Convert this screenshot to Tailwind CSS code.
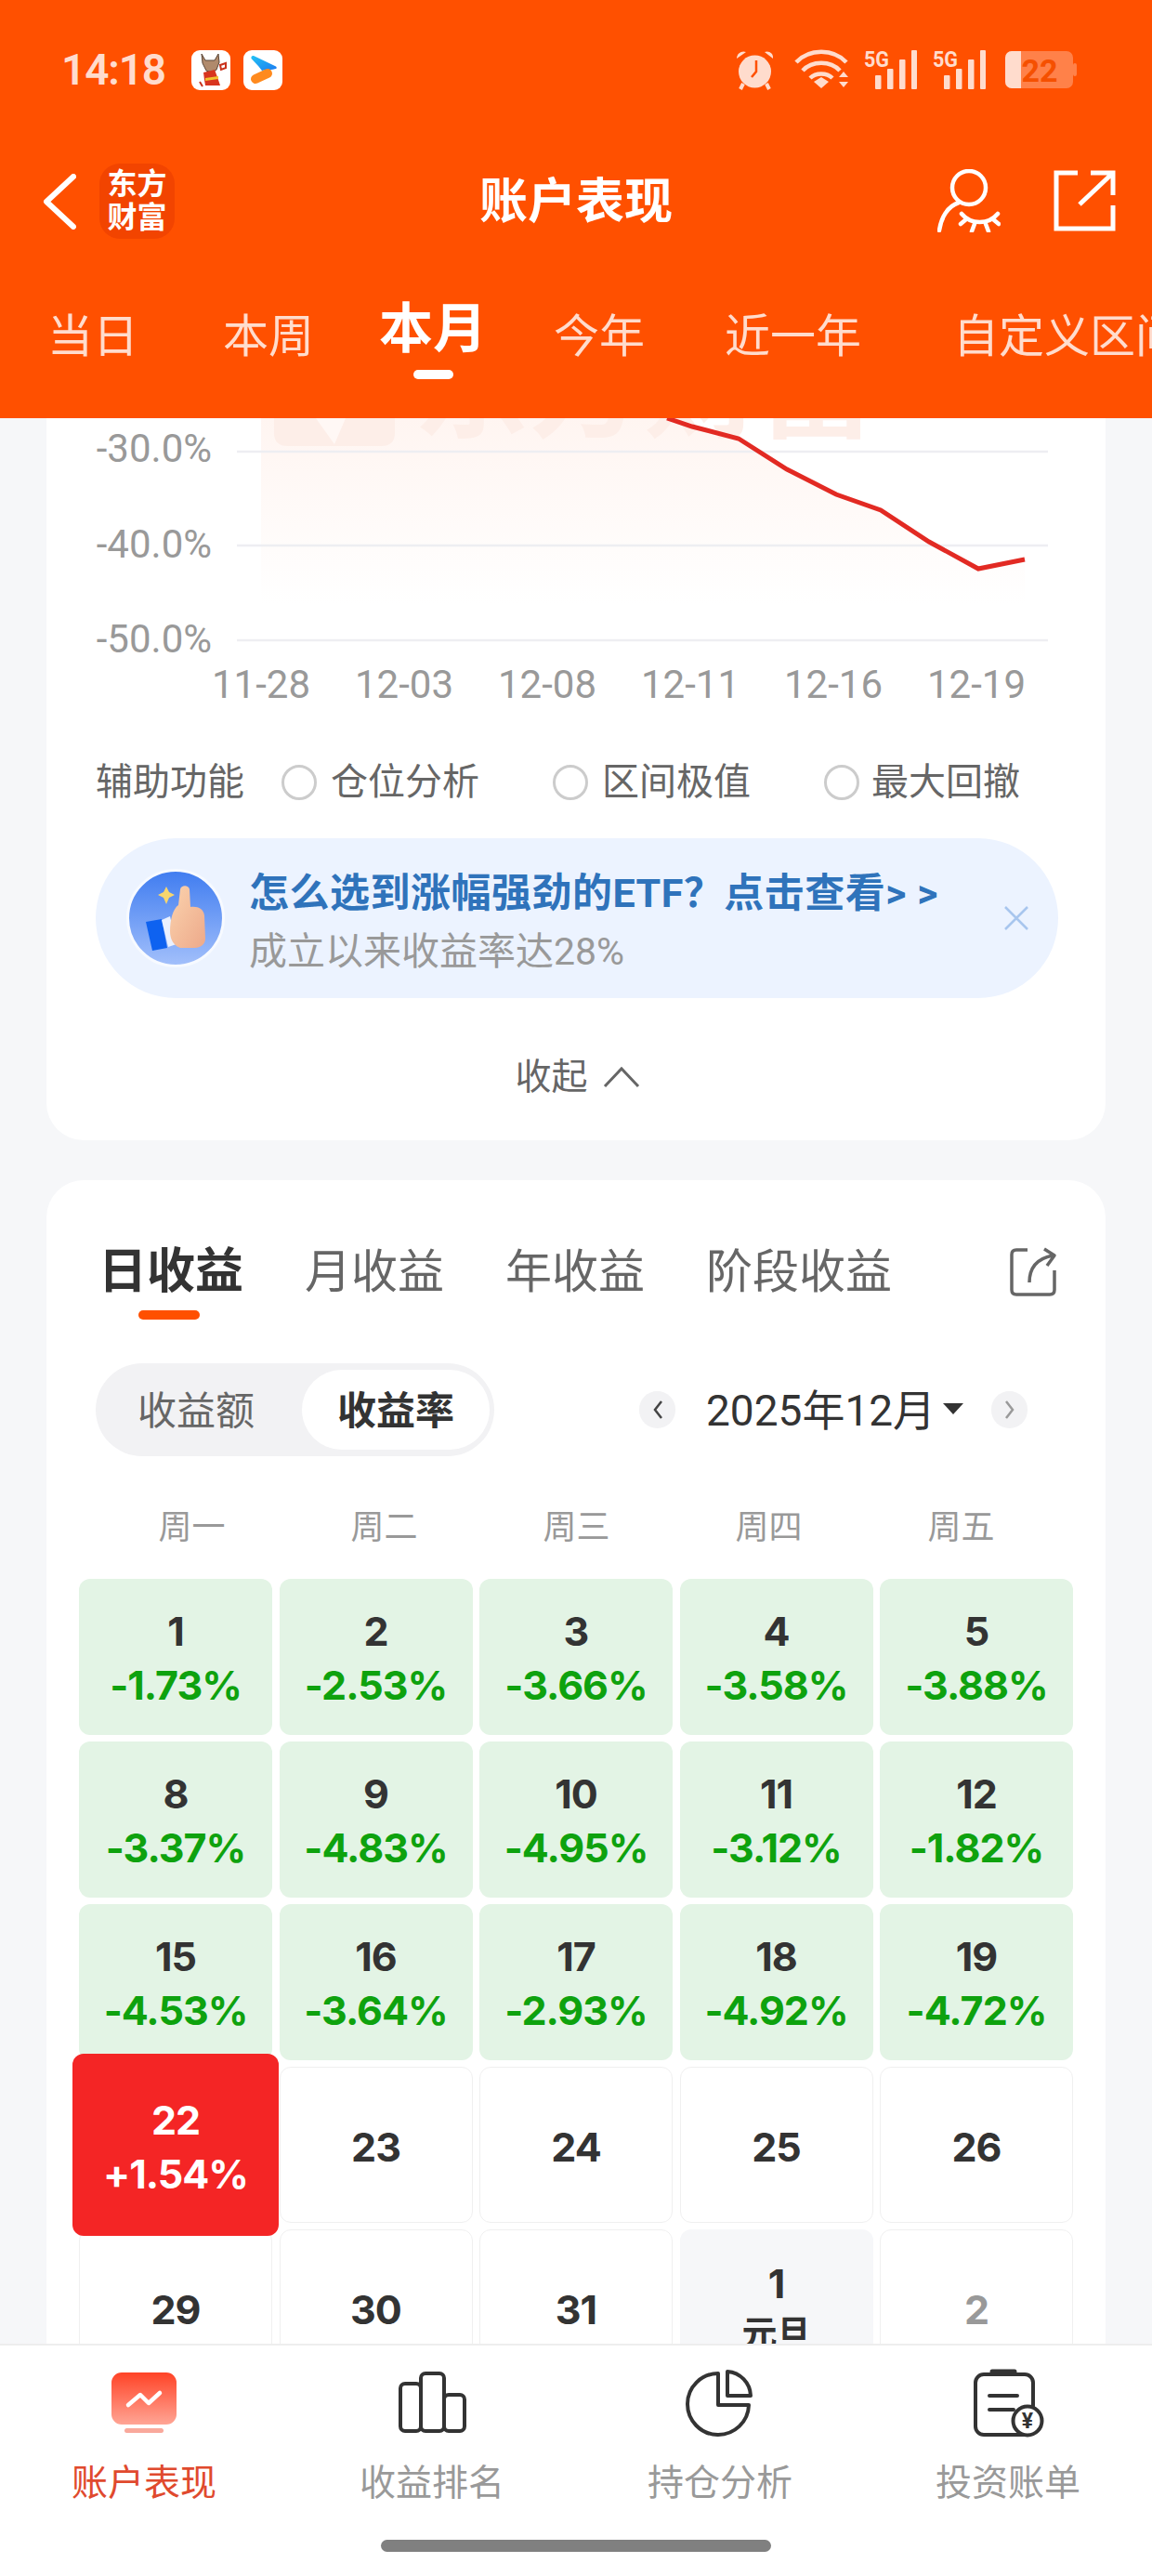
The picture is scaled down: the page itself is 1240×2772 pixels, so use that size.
<!DOCTYPE html>
<html lang="zh-CN">
<head>
  <meta charset="UTF-8">
  <title>账户表现</title>
  <script src="https://cdn.jsdelivr.net/npm/@tailwindcss/browser@4"></script>
</head>
<body class="bg-[#f6f7f9]">
<div class="w-[1240px] h-[2772px] flex flex-col overflow-hidden font-['Roboto','Noto_Sans_CJK_SC',sans-serif]">

  <!-- header -->
  <header class="h-[450px] shrink-0 bg-[#ff5000] text-white">
    <!-- status bar -->
    <div class="h-[150px] flex items-center pl-[66px] pr-[81px]">
      <span class="w-[140px] text-[46px] font-semibold tracking-tight text-[#ffdccd]">14:18</span>
      <svg class="w-[42px] h-[43px]" viewBox="0 0 42 43">
        <rect width="42" height="43" rx="9" fill="#fff"/>
        <path d="M11 4l4 7h10l4-7 1 9-3 8-5 3-6-2-4-8z" fill="#b08a6c" stroke="#5b4636" stroke-width="1"/>
        <path d="M13 24l12-3 3 8 3 9H15l-1-6z" fill="#d8351f"/>
        <path d="M15 30l14-2v3l-14 2z" fill="#f2c230"/>
        <path d="M31 16l6-2v5l-5 2zM9 34l3 5" stroke="#c9321c" stroke-width="2" fill="#fff"/>
      </svg>
      <svg class="w-[42px] h-[43px] ml-[14px]" viewBox="0 0 42 43">
        <defs><linearGradient id="playBlue" x1="0" y1="0" x2="1" y2="1"><stop offset="0" stop-color="#22c3f5"/><stop offset="1" stop-color="#1c7bf0"/></linearGradient></defs>
        <rect width="42" height="43" rx="9" fill="#fff"/>
        <path d="M11 6c-1.500-.5-3 .5-2.500 3L16 17l4 5c3-.5 12-1 15-2 1-.5 1-1.500 0-2.500z" fill="url(#playBlue)"/>
        <path d="M13 31l13-6" stroke="#ff8a1e" stroke-width="10" stroke-linecap="round"/>
      </svg>
      <div class="ml-auto flex items-center">
        <svg class="w-[44px] h-[44px]" viewBox="0 0 44 44" fill="#ffdccd">
          <path d="M2 10c0-6 6-9 10-7zM41 10c1-6-5-9-9-7z"/>
          <circle cx="21.500" cy="24" r="17.500"/>
          <path d="M9 37l-3 6M34 37l3 6" stroke="#ffdccd" stroke-width="4"/>
          <path d="M23 12v12l-5 6" stroke="#ff5000" stroke-width="2.500" fill="none"/>
        </svg>
        <svg class="w-[58px] h-[44px] ml-[20px]" viewBox="0 0 58 44" fill="none" stroke="#ffdccd" stroke-width="4.500">
          <path d="M2 14c14-15 40-15 54 0"/>
          <path d="M9 23c10-11 30-11 40 0"/>
          <path d="M17 31c6-6 18-6 24 0"/>
          <path d="M21 35l8-5 8 5-8 7z" fill="#ffdccd" stroke="none"/>
          <path d="M48 30l5-6 5 6zM48 35l5 6 5-6z" fill="#ffdccd" stroke="none"/>
        </svg>
        <svg class="w-[57px] h-[44px] ml-[17px]" viewBox="0 0 57 44" fill="#ffdccd">
          <text x="0" y="19" font-size="23" font-weight="700" textLength="27" lengthAdjust="spacingAndGlyphs">5G</text>
          <rect x="12" y="28" width="6.500" height="15" rx="1"/><rect x="25" y="21" width="6.500" height="22" rx="1"/><rect x="38" y="11" width="6.500" height="32" rx="1"/><rect x="51" y="1" width="6" height="42" rx="1"/>
        </svg>
        <svg class="w-[57px] h-[44px] ml-[17px]" viewBox="0 0 57 44" fill="#ffdccd">
          <text x="0" y="19" font-size="23" font-weight="700" textLength="27" lengthAdjust="spacingAndGlyphs">5G</text>
          <rect x="12" y="28" width="6.500" height="15" rx="1"/><rect x="25" y="21" width="6.500" height="22" rx="1"/><rect x="38" y="11" width="6.500" height="32" rx="1"/><rect x="51" y="1" width="6" height="42" rx="1"/>
        </svg>
        <svg class="w-[77px] h-[40px] ml-[21px]" viewBox="0 0 77 40">
          <rect width="73" height="40" rx="7" fill="#ff8149"/>
          <path d="M7 0h10v40H7a7 7 0 0 1-7-7V7a7 7 0 0 1 7-7z" fill="#ffdccd"/>
          <rect x="73" y="13" width="4" height="14" rx="2" fill="#ff8149"/>
          <text x="37" y="33" text-anchor="middle" font-size="34" font-weight="700" fill="#f55000">22</text>
        </svg>
      </div>
    </div>

    <!-- nav -->
    <div class="relative h-[132px] flex items-center pl-[46px] pr-[39px]">
      <svg class="w-[36px] h-[60px] mt-[2px]" viewBox="0 0 36 60" fill="none" stroke="#fff" stroke-width="6" stroke-linecap="round" stroke-linejoin="round"><path d="M33 3L4 30l29 27"/></svg>
      <div class="ml-[25px] w-[81px] h-[81px] rounded-[22px] bg-[#f24400] flex flex-col items-center justify-center text-[32px] leading-[36px] font-bold">
        <span>东方</span><span>财富</span>
      </div>
      <h1 class="absolute left-1/2 -translate-x-1/2 mt-[4px] text-[52px] font-bold whitespace-nowrap">账户表现</h1>
      <svg class="ml-auto w-[68px] h-[68px]" viewBox="0 0 68 68" fill="none" stroke="#fff" stroke-width="4.500" stroke-linecap="round">
        <circle cx="34" cy="20" r="18"/>
        <path d="M23 36C11 40 4 52 2 66"/>
        <path d="M26 48c10 12 29 12 39 0"/>
        <path d="M31 54l-6 5M40 59l-3 8M52 59l3 8M60 54l6 5"/>
      </svg>
      <svg class="ml-[57px] w-[67px] h-[66px]" viewBox="0 0 67 66" fill="none" stroke="#fff" stroke-width="5">
        <path d="M26 3H3v60h61V38"/>
        <path d="M28 37L64 3M40 3h24v24"/>
      </svg>
    </div>

    <!-- period tabs -->
    <div class="h-[168px] pt-[40px] pl-[51px] flex items-start whitespace-nowrap overflow-hidden text-[49px] leading-[60px] text-[#ffdccd]">
      <span class="mt-[11px]">当日</span>
      <span class="mt-[11px] ml-[91px]">本周</span>
      <div class="ml-[70px] flex flex-col items-center mt-[2px]">
        <span class="text-[58px] font-bold text-white">本月</span>
        <span class="mt-[14px] w-[43px] h-[10px] rounded-full bg-white"></span>
      </div>
      <span class="mt-[11px] ml-[72px]">今年</span>
      <span class="mt-[11px] ml-[86px]">近一年</span>
      <span class="mt-[11px] ml-[99px]">自定义区间</span>
    </div>
  </header>

  <!-- content -->
  <main class="flex-1 overflow-hidden px-[50px]">
    <section class="h-[777px] bg-white rounded-b-[40px] overflow-hidden">
      <svg class="w-[1140px] h-[320px]" viewBox="50 450 1140 320">
        <defs>
          <linearGradient id="areaFill" x1="0" y1="0" x2="0" y2="1"><stop offset="0" stop-color="#fff5f1"/><stop offset="1" stop-color="#ffffff"/></linearGradient>
        </defs>
        <path d="M281 450H718L745 459L795 472L847 505L900 532L948 549L1000 583L1053 612L1103 602V650H281Z" fill="url(#areaFill)"/>
        <path d="M295 450H425V466Q425 480 410 480H310Q295 480 295 466Z" fill="#fdeee8"/>
        <path d="M340 450L360 478L372 450Z" fill="#fff8f5"/>
        <text x="445" y="461" font-size="124" font-weight="700" fill="#fdeee8">东方财富</text>
        <g stroke="#eeeef2" stroke-width="2.500">
          <path d="M255 486H1128M255 587H1128M255 689H1128"/>
        </g>
        <path d="M718 450L745 459L795 472L847 505L900 532L948 549L1000 583L1053 612L1103 602" fill="none" stroke="#e22a23" stroke-width="5"/>
        <g font-size="42" fill="#999" text-anchor="end">
          <text x="228" y="497">-30.0%</text>
          <text x="228" y="600">-40.0%</text>
          <text x="228" y="702">-50.0%</text>
        </g>
        <g font-size="42" fill="#999" text-anchor="middle">
          <text x="281" y="751">11-28</text>
          <text x="435" y="751">12-03</text>
          <text x="589" y="751">12-08</text>
          <text x="743" y="751">12-11</text>
          <text x="897" y="751">12-16</text>
          <text x="1051" y="751">12-19</text>
        </g>
      </svg>

      <!-- assist options -->
      <div class="mt-[47px] h-[50px] pl-[53px] flex items-center text-[40px] text-[#666]">
        <span>辅助功能</span>
        <span class="ml-[40px] w-[38px] h-[38px] rounded-full border-[3px] border-[#ccc]"></span>
        <span class="ml-[15px]">仓位分析</span>
        <span class="ml-[79px] w-[38px] h-[38px] rounded-full border-[3px] border-[#ccc]"></span>
        <span class="ml-[15px]">区间极值</span>
        <span class="ml-[79px] w-[38px] h-[38px] rounded-full border-[3px] border-[#ccc]"></span>
        <span class="ml-[13px]">最大回撤</span>
      </div>

      <!-- promo banner -->
      <div class="mt-[35px] ml-[53px] w-[1036px] h-[172px] rounded-full bg-[#ecf3ff] flex items-center pl-[33px] pr-[31px]">
        <svg class="w-[106px] h-[108px] shrink-0" viewBox="0 0 106 108">
          <defs>
            <linearGradient id="thumbBg" x1="0" y1="0" x2="0" y2="1"><stop offset="0" stop-color="#3f7cf0"/><stop offset="1" stop-color="#a3c0fb"/></linearGradient>
            <linearGradient id="thumbSkin" x1="0" y1="0" x2="1" y2="1"><stop offset="0" stop-color="#fbd3ae"/><stop offset="1" stop-color="#eda98a"/></linearGradient>
          </defs>
          <circle cx="53" cy="54" r="51.500" fill="url(#thumbBg)" stroke="#f7faff" stroke-width="3"/>
          <path d="M43 20l3 6 6 3-6 3-3 7-3-7-6-3 6-3z" fill="#f8d66d"/>
          <path d="M21 58l17-3 6 31-16 3z" fill="#0e62f0"/>
          <path d="M38 56l9-4 7 30-9 3z" fill="#eaf1ff"/>
          <path d="M56 40l2-17c1-5 9-5 10 0l1 19c8-1 14 2 15 9l1 25c0 6-5 10-12 10H58c-6-2-11-8-11-18 0-12 3-24 9-28z" fill="url(#thumbSkin)"/>
        </svg>
        <div class="ml-[26px] pt-[8px] flex flex-col">
          <span class="text-[43px] leading-[60px] font-bold tracking-[0.5px] text-[#2f73bb] whitespace-nowrap">怎么选到涨幅强劲的ETF？点击查看&gt; &gt;</span>
          <span class="text-[41px] leading-[60px] mt-[3px] text-[#999]">成立以来收益率达28%</span>
        </div>
        <svg class="ml-auto w-[28px] h-[28px] shrink-0" viewBox="0 0 28 28" fill="none" stroke="#a8c6ee" stroke-width="2.500"><path d="M2 2l24 24M26 2L2 26"/></svg>
      </div>

      <!-- collapse -->
      <div class="mt-[60px] h-[50px] pl-[3px] flex items-center justify-center text-[39px] text-[#666]">
        <span>收起</span>
        <svg class="ml-[16px] w-[40px] h-[24px]" viewBox="0 0 40 24" fill="none" stroke="#666" stroke-width="3"><path d="M2 22L20 3l18 19"/></svg>
      </div>
    </section>

    <section class="mt-[43px] bg-white rounded-t-[40px] pt-[63px]">
      <!-- profit tabs -->
      <div class="h-[70px] pt-[2px] pl-[56px] pr-[52px] flex items-center gap-[66px] text-[50px] text-[#666]">
        <span class="text-[52px] font-bold text-[#333]">日收益</span>
        <span>月收益</span>
        <span>年收益</span>
        <span>阶段收益</span>
        <svg class="ml-auto -mt-[2px] w-[52px] h-[53px]" viewBox="0 0 52 53" fill="none" stroke="#666" stroke-width="3.500" stroke-linejoin="round">
          <path d="M20 3H8Q3 3 3 8v38q0 5 5 5h36q5 0 5-5V25"/>
          <path d="M22 38Q22 14 47 9M38 2l11 7-8 11"/>
        </svg>
      </div>
      <div class="mt-[7px] ml-[99px] w-[66px] h-[10px] rounded-full bg-[#ff5000]"></div>

      <!-- toggle + month -->
      <div class="mt-[47px] h-[100px] pl-[53px] flex items-center">
        <div class="w-[429px] h-[100px] rounded-full bg-[#f2f2f4] flex items-center justify-between pl-[45px] pr-[5px] text-[42px]">
          <span class="text-[#666] pt-[2px]">收益额</span>
          <span class="w-[202px] h-[86px] pt-[2px] rounded-full bg-white flex items-center justify-center font-bold text-[#333]">收益率</span>
        </div>
        <span class="ml-[156px] w-[39px] h-[40px] rounded-full bg-[#f2f2f4] flex items-center justify-center">
          <svg class="w-[12px] h-[24px]" viewBox="0 0 12 24" fill="none" stroke="#444" stroke-width="2.500"><path d="M10 3L3 12l7 9"/></svg>
        </span>
        <span class="ml-[33px] pt-[2px] text-[46px] text-[#333] whitespace-nowrap">2025年12月</span>
        <svg class="ml-[8px] -mt-[2px] w-[22px] h-[12px]" viewBox="0 0 22 12" fill="#333"><path d="M0 0h22L11 12z"/></svg>
        <span class="ml-[30px] w-[39px] h-[40px] rounded-full bg-[#f2f2f4] flex items-center justify-center">
          <svg class="w-[12px] h-[24px]" viewBox="0 0 12 24" fill="none" stroke="#999" stroke-width="2.500"><path d="M2 3l7 9-7 9"/></svg>
        </span>
      </div>

      <!-- weekdays -->
      <div class="mt-[50px] ml-[53px] w-[1035px] h-[50px] grid grid-cols-5 items-center text-center text-[36px] text-[#999]">
        <span>周一</span><span>周二</span><span>周三</span><span>周四</span><span>周五</span>
      </div>

      <!-- calendar -->
      <div class="mt-[32px] ml-[35px] w-[1070px] grid grid-cols-5 gap-x-[7.5px] gap-y-[7px] auto-rows-[168px] font-['Inter','Noto_Sans_CJK_SC',sans-serif] text-[43px] leading-[58px] font-bold tracking-[-1px] text-center text-[#333]">
        <div class="rounded-[12px] bg-[#e3f4e5] pt-[27px]">1<div class="text-[#0ea20e]">-1.73%</div></div>
        <div class="rounded-[12px] bg-[#e3f4e5] pt-[27px]">2<div class="text-[#0ea20e]">-2.53%</div></div>
        <div class="rounded-[12px] bg-[#e3f4e5] pt-[27px]">3<div class="text-[#0ea20e]">-3.66%</div></div>
        <div class="rounded-[12px] bg-[#e3f4e5] pt-[27px]">4<div class="text-[#0ea20e]">-3.58%</div></div>
        <div class="rounded-[12px] bg-[#e3f4e5] pt-[27px]">5<div class="text-[#0ea20e]">-3.88%</div></div>
        <div class="rounded-[12px] bg-[#e3f4e5] pt-[27px]">8<div class="text-[#0ea20e]">-3.37%</div></div>
        <div class="rounded-[12px] bg-[#e3f4e5] pt-[27px]">9<div class="text-[#0ea20e]">-4.83%</div></div>
        <div class="rounded-[12px] bg-[#e3f4e5] pt-[27px]">10<div class="text-[#0ea20e]">-4.95%</div></div>
        <div class="rounded-[12px] bg-[#e3f4e5] pt-[27px]">11<div class="text-[#0ea20e]">-3.12%</div></div>
        <div class="rounded-[12px] bg-[#e3f4e5] pt-[27px]">12<div class="text-[#0ea20e]">-1.82%</div></div>
        <div class="rounded-[12px] bg-[#e3f4e5] pt-[27px]">15<div class="text-[#0ea20e]">-4.53%</div></div>
        <div class="rounded-[12px] bg-[#e3f4e5] pt-[27px]">16<div class="text-[#0ea20e]">-3.64%</div></div>
        <div class="rounded-[12px] bg-[#e3f4e5] pt-[27px]">17<div class="text-[#0ea20e]">-2.93%</div></div>
        <div class="rounded-[12px] bg-[#e3f4e5] pt-[27px]">18<div class="text-[#0ea20e]">-4.92%</div></div>
        <div class="rounded-[12px] bg-[#e3f4e5] pt-[27px]">19<div class="text-[#0ea20e]">-4.72%</div></div>

        <div class="relative">
          <div class="absolute z-10 -inset-x-[7px] -inset-y-[14px] rounded-[12px] bg-[#f42525] text-white flex flex-col items-center justify-center pt-[4px]">
            <span>22</span><span>+1.54%</span>
          </div>
        </div>
        <div class="rounded-[12px] border border-[#f0f0f0] pt-[4px] flex items-center justify-center">23</div>
        <div class="rounded-[12px] border border-[#f0f0f0] pt-[4px] flex items-center justify-center">24</div>
        <div class="rounded-[12px] border border-[#f0f0f0] pt-[4px] flex items-center justify-center">25</div>
        <div class="rounded-[12px] border border-[#f0f0f0] pt-[4px] flex items-center justify-center">26</div>

        <div class="rounded-[12px] border border-[#f0f0f0] pt-[4px] flex items-center justify-center">29</div>
        <div class="rounded-[12px] border border-[#f0f0f0] pt-[4px] flex items-center justify-center">30</div>
        <div class="rounded-[12px] border border-[#f0f0f0] pt-[4px] flex items-center justify-center">31</div>
        <div class="rounded-[12px] bg-[#f6f7f9] pb-[4px] flex flex-col items-center justify-center">
          <span>1</span><span class="text-[38px] leading-[48px] font-bold">元旦</span>
        </div>
        <div class="rounded-[12px] border border-[#f0f0f0] pt-[4px] flex items-center justify-center text-[#999]">2</div>
      </div>
    </section>
  </main>

  <!-- bottom tabs -->
  <footer class="h-[250px] shrink-0 bg-white border-t-2 border-[#eee] pt-[24px]">
    <div class="grid grid-cols-4 text-center text-[39px] text-[#999]">
      <div class="flex flex-col items-center">
        <svg class="w-[80px] h-[76px]" viewBox="115 2548 80 76">
          <defs>
            <linearGradient id="tabRed" x1="0" y1="0" x2="0" y2="1"><stop offset="0" stop-color="#ff4326"/><stop offset="1" stop-color="#ffa595"/></linearGradient>
          </defs>
          <rect x="120" y="2553" width="70" height="56" rx="11" fill="url(#tabRed)"/>
          <rect x="134" y="2613" width="42" height="5" rx="2.500" fill="#f9a99c"/>
          <path d="M138 2588l13-11 9 9 12-11" fill="none" stroke="#fff" stroke-width="4.500" stroke-linecap="round" stroke-linejoin="round"/>
        </svg>
        <span class="mt-[23px] h-[50px] leading-[50px] text-[#e04a2e]">账户表现</span>
      </div>
      <div class="flex flex-col items-center">
        <svg class="w-[80px] h-[76px]" viewBox="425 2548 80 76" fill="none" stroke="#333" stroke-width="4">
          <rect x="431" y="2565" width="22" height="51" rx="5"/>
          <rect x="453" y="2554" width="25" height="62" rx="5"/>
          <rect x="478" y="2577" width="22" height="39" rx="5"/>
        </svg>
        <span class="mt-[23px] h-[50px] leading-[50px]">收益排名</span>
      </div>
      <div class="flex flex-col items-center">
        <svg class="w-[80px] h-[76px]" viewBox="735 2548 80 76" fill="none" stroke="#333" stroke-width="4" stroke-linejoin="round">
          <path d="M773 2554v34h33A33 33 0 1 1 773 2554z"/>
          <path d="M783 2552v26h25a27 27 0 0 0-25-26z"/>
        </svg>
        <span class="mt-[23px] h-[50px] leading-[50px]">持仓分析</span>
      </div>
      <div class="flex flex-col items-center">
        <svg class="w-[80px] h-[76px]" viewBox="1045 2548 80 76" fill="none" stroke="#333" stroke-width="4" stroke-linecap="round">
          <rect x="1050" y="2555" width="62" height="65" rx="9"/>
          <path d="M1068 2552h24" stroke-width="5"/>
          <path d="M1065 2578h30M1065 2593h26"/>
          <circle cx="1106" cy="2605" r="15.500" fill="#fff"/>
          <text x="1106" y="2613" text-anchor="middle" font-size="23" font-weight="700" fill="#333" stroke="none">¥</text>
        </svg>
        <span class="mt-[23px] h-[50px] leading-[50px]">投资账单</span>
      </div>
    </div>
    <div class="mt-[36px] mx-auto w-[420px] h-[13px] rounded-full bg-[#808080]"></div>
  </footer>
</div>
</body>
</html>
